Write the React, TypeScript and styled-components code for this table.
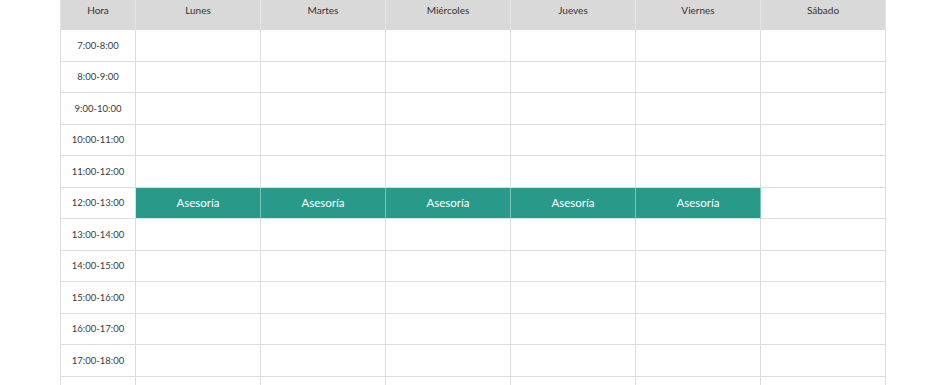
import React from "react";
import styled, { createGlobalStyle } from "styled-components";

const Global = createGlobalStyle`
  html, body { margin: 0; padding: 0; background: #ffffff; }
  body { font-family: Lato, "Open Sans", sans-serif; }
`;

const Page = styled.div`
  padding-left: 60px;
`;

const Grid = styled.div`
  display: grid;
  grid-template-columns: 76px repeat(6, 125px);
  width: 826px;
`;

const HeadCell = styled.div`
  height: 30px;
  box-sizing: border-box;
  background: #d9d9d9;
  border-right: 1px solid #e4e4e4;
  display: flex;
  justify-content: center;
  align-items: flex-start;
  padding-top: 4px;
  font-size: 10px;
  line-height: 12px;
  color: #333333;
  &:first-child { border-left: 1px solid #e4e4e4; }
`;

const Cell = styled.div<{ $first?: boolean; $busy?: boolean }>`
  height: 31.5px;
  box-sizing: border-box;
  border-bottom: 1px solid ${(p) => (p.$busy ? "#d6e9e5" : "#dcdcdc")};
  border-right: 1px solid ${(p) => (p.$busy ? "#7cc3b7" : "#dcdcdc")};
  border-left: ${(p) => (p.$first ? "1px solid #dcdcdc" : "none")};
  background: ${(p) => (p.$busy ? "#29998a" : "#ffffff")};
  display: flex;
  align-items: center;
  justify-content: center;
  color: ${(p) => (p.$busy ? "#ffffff" : "#3a3a3a")};
  font-size: ${(p) => (p.$busy ? "11.5px" : "9.5px")};
`;

const days = ["Lunes", "Martes", "Miércoles", "Jueves", "Viernes", "Sábado"];
const hours = [7, 8, 9, 10, 11, 12, 13, 14, 15, 16, 17, 18];

export default function App() {
  return (
    <>
      <Global />
      <Page>
        <Grid>
          <HeadCell>Hora</HeadCell>
          {days.map((d) => (
            <HeadCell key={d}>{d}</HeadCell>
          ))}
          {hours.map((h) => (
            <React.Fragment key={h}>
              <Cell $first>{`${h}:00-${h + 1}:00`}</Cell>
              {days.map((d, i) => {
                const busy = h === 12 && i < 5;
                return (
                  <Cell key={d} $busy={busy}>
                    {busy ? "Asesoría" : ""}
                  </Cell>
                );
              })}
            </React.Fragment>
          ))}
        </Grid>
      </Page>
    </>
  );
}
